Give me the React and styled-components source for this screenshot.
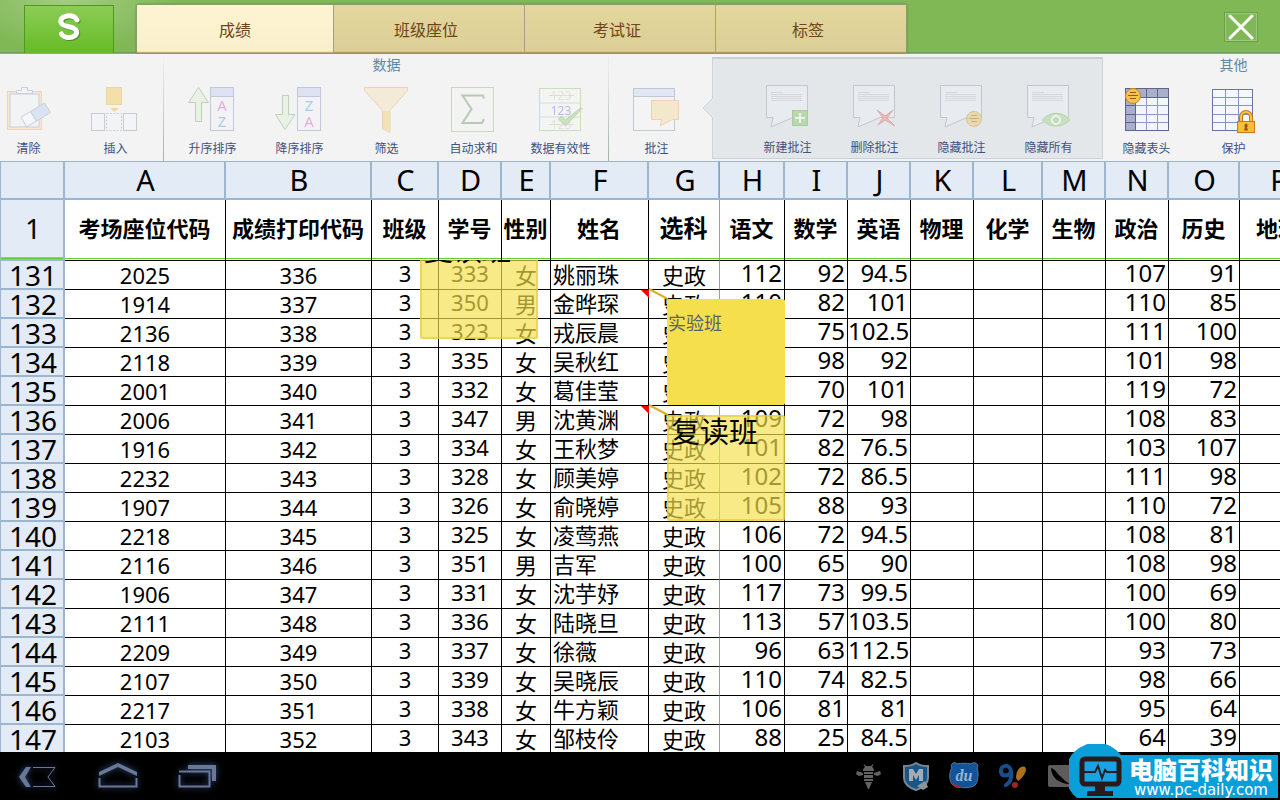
import styled, { createGlobalStyle, css } from 'styled-components';

const GlobalStyle = createGlobalStyle`
  * {
    box-sizing: border-box;
  }

  body {
    margin: 0;
    background: #fff;
    font-family: "Noto Sans", "Noto Sans CJK SC", sans-serif;
  }

  button {
    font-family: inherit;
    border: none;
    background: none;
    padding: 0;
    cursor: pointer;
  }
`;

const Page = styled.div`
  display: flex;
  flex-direction: column;
  height: 100vh;
  overflow: hidden;
`;

/* ---------- title bar ---------- */

const TopBar = styled.header`
  display: flex;
  align-items: flex-end;
  flex: none;
  height: 54px;
  padding-left: 24px;
  background: radial-gradient(ellipse 110px 50px at 69px 0, #a3cc82, #80b855);
  border-bottom: 1px solid #8ba6a5;
  box-shadow: inset 0 -1px 0 #6f9d55;
`;

const LogoButton = styled.button`
  display: flex;
  justify-content: center;
  align-items: flex-start;
  width: 90px;
  height: 48px;
  padding-top: 6px;
  margin-right: 22px;
  background: linear-gradient(#8ccc56, #66bb25);
  border: 1px solid #4e9a20;
  border-bottom: none;
`;

const TabList = styled.nav`
  display: flex;
  border: 1px solid #85a06c;
  border-bottom: none;
  border-radius: 2px 2px 0 0;
  box-shadow: 0 0 2px rgba(60, 80, 40, 0.5);
`;

const Tab = styled.button`
  width: ${(props) => (props.$active ? '197px' : '191px')};
  height: 48px;
  padding: ${(props) => (props.$active ? '2px 0 0' : '2px 6px 0 0')};
  font-size: 16px;
  line-height: 24px;
  color: #6f4517;
  background: ${(props) =>
    props.$active ? 'linear-gradient(#fef4d2, #f8efcb)' : 'linear-gradient(#e3d79e, #dbce96)'};
  border-right: 1px solid #a89f82;
  box-shadow: inset 0 -2px 1px -1px rgba(110, 90, 40, 0.5);

  &:last-child {
    width: 190px;
    border-right: none;
  }
`;

const CloseButton = styled.button`
  display: flex;
  justify-content: center;
  align-items: center;
  align-self: center;
  width: 34px;
  height: 30px;
  margin-left: auto;
  margin-right: 22px;
  border: 1px solid #6d9f48;
  box-shadow: inset 0 0 0 1px #9cc97b;
`;

/* ---------- ribbon ---------- */

const Ribbon = styled.div`
  display: flex;
  flex: none;
  height: 107px;
  overflow: hidden;
  background: #f3f3f3;
`;

const Group = styled.section`
  display: flex;
  flex-direction: column;
  flex: none;
  padding: 0 ${(props) => props.$pad || '0'};
  border-right: 1px solid;
  border-image: linear-gradient(#f3f3f3, #9fb3a5) 1;

  ${(props) =>
    props.$scrolled &&
    css`
      margin-left: -15px;
    `}

  ${(props) =>
    props.$plain &&
    css`
      border: none;
    `}
`;

const GroupTitle = styled.h2`
  height: 22px;
  margin: 0;
  font-size: 14px;
  font-weight: 400;
  line-height: 22px;
  text-align: center;
  color: #6485a4;
`;

const Tools = styled.div`
  display: flex;
  width: ${(props) => props.$width || 'auto'};
`;

const Tool = styled.button`
  display: flex;
  flex-direction: column;
  align-items: center;
  width: 87px;
  padding-top: 9px;
  font-size: 12px;
  line-height: 18px;
  color: #3f5180;

  svg {
    opacity: ${(props) => (props.$dim ? 0.4 : 1)};
    margin-bottom: 5px;
  }
`;

const CommentPanel = styled.section`
  position: relative;
  display: flex;
  align-items: flex-start;
  flex: none;
  width: 391px;
  height: 102px;
  margin-top: 3px;
  padding: 16px 0 0 31px;
  background: #e3e7ea;
  border: 1px solid #ccd3d8;
  border-top: 2px solid #c8ced4;
`;

const PanelArrow = styled.svg`
  position: absolute;
  left: -11px;
  top: 38px;
`;

/* ---------- sheet ---------- */

const Sheet = styled.main`
  position: relative;
  flex: 1;
  min-height: 0;
  overflow: hidden;
`;

/* zero width with a fixed layout keeps every column at its own size */
const Grid = styled.table`
  width: 0;
  table-layout: fixed;
  border-collapse: separate;
  border-spacing: 0;
  color: #000;
`;

const Col = styled.col`
  width: ${(props) => props.$width}px;
`;

const lineColor = (props) => (props.$frozen ? '#6bc93b' : '#000');

const ColumnHead = styled.th`
  height: 39px;
  padding: 0 0 0 2px;
  font-size: 29px;
  font-weight: 400;
  line-height: 36px;
  background: #e3ebf7;
  border-top: 1px solid #9db6d0;
  border-bottom: 2px solid #9db6d0;
  border-right: 2px solid #9db6d0;

  ${(props) =>
    props.$frozen &&
    css`
      border-right: 1px solid #6bc93b;
      box-shadow: inset -1px 0 0 #9db6d0;
    `}
`;

const Corner = styled(ColumnHead)`
  border-left: 1px solid #9db6d0;
`;

const RowHead = styled.th`
  padding: 0 0 0 2px;
  font-size: 28px;
  font-weight: 400;
  text-align: center;
  background: #e3ebf7;
  border-left: 1px solid #9db6d0;
  border-right: 2px solid #9db6d0;
  border-bottom: 2px solid #9db6d0;
`;

const RowNumber = styled.span`
  display: block;
  height: 27px;
  line-height: 29px;
`;

const FieldRow = styled.tr`
  height: 61px;

  & > td,
  & > th {
    padding-bottom: 4px;
    box-shadow: inset 0 -1px 0 #fff, inset 0 -2px 0 #5fd02c;
  }

  & > th:first-child {
    box-shadow: inset 0 -1px 0 #5fd02c, inset 0 -2px 0 #9db6d0;
  }
`;

const Field = styled.th`
  padding: 0 1px 0 0;
  font-size: ${(props) => (props.$large ? '24px' : '22px')};
  font-weight: 700;
  line-height: 32px;
  white-space: nowrap;
  border-right: 1px solid ${lineColor};
  border-bottom: 1px solid #000;
`;

const Cell = styled.td`
  height: 29px;
  padding: 0;
  font-size: 22px;
  line-height: 28px;
  vertical-align: top;
  text-align: center;
  white-space: nowrap;
  border-right: 1px solid ${lineColor};
  border-bottom: 1px solid #000;

  ${(props) =>
    props.$kind === 'raised' &&
    css`
      line-height: 25px;
    `}

  ${(props) =>
    props.$kind === 'name' &&
    css`
      padding-left: 2px;
      line-height: 27px;
      text-align: left;
    `}

  ${(props) =>
    props.$kind === 'score' &&
    css`
      padding-right: 2px;
      font-size: 24px;
      line-height: 23px;
      text-align: right;
    `}
`;

/* Notes float above the scrolled rows and are cut off at the frozen line */
const NoteLayer = styled.div`
  position: absolute;
  top: 99px;
  left: 0;
  right: 0;
  bottom: 0;
  overflow: hidden;
  pointer-events: none;
`;

const Note = styled.aside`
  position: absolute;
  left: ${(props) => props.$x}px;
  top: ${(props) => props.$y}px;
  width: 118px;
  height: 106px;
  padding: 0 2px;
  font-size: 29px;
  line-height: 30px;
  white-space: nowrap;
  color: #000;
  background: rgba(245, 223, 75, 0.67);
  border: 2px solid rgba(226, 200, 60, 0.6);
  border-radius: 2px;

  ${(props) =>
    props.$solid &&
    css`
      padding: 11px 0;
      font-size: 18px;
      line-height: 24px;
      color: #55636b;
      background: #f5df4d;
      border-color: #f5df4d;
      border-width: 1px;
    `}
`;

const Leaders = styled.svg`
  position: absolute;
  left: 640px;
  top: 28px;
`;

/* ---------- system bar ---------- */

const SystemBar = styled.footer`
  position: relative;
  display: flex;
  align-items: center;
  flex: none;
  height: 48px;
  padding-left: 14px;
  background: #000;
`;

const NavButton = styled.button`
  display: flex;
  width: 48px;
  height: 36px;
  margin-right: 32px;

  svg {
    filter: drop-shadow(0 0 3px #33518a);
  }
`;

const Tray = styled.div`
  display: flex;
  gap: 16px;
  margin-left: auto;
  margin-right: 204px;
`;

const Watermark = styled.div`
  position: absolute;
  right: 2px;
  top: -8px;
  display: flex;
  height: 54px;
`;

const Badge = styled.svg`
  position: relative;
  z-index: 1;
  margin-right: -50px;
`;

const WatermarkText = styled.div`
  margin-top: 11px;
  padding: 1px 5px 0 50px;
  color: #fff;
  background: #0a9fd8;
  text-align: center;
  white-space: nowrap;
`;

const WatermarkName = styled.div`
  font-family: "Noto Sans CJK SC", sans-serif;
  font-size: 24px;
  font-weight: 900;
  line-height: 26px;
`;

const WatermarkUrl = styled.div`
  font-family: "DejaVu Sans", sans-serif;
  font-size: 15px;
  line-height: 16px;
`;

/* ---------- icons ---------- */

const Icon = ({ children }) => (
  <svg width="50" height="50" viewBox="0 0 50 50" fill="none" aria-hidden="true">
    {children}
  </svg>
);

const ClearIcon = () => (
  <Icon>
    <rect x="3.5" y="6.5" width="34" height="38" fill="#f3dca4" stroke="#e5a94a" />
    <rect x="6" y="9" width="29" height="33" fill="#f1f3f8" stroke="#8d9bb5" />
    <path d="M12.500 8.500v-3h5v-3h6v3h5v3z" fill="#f1f3f8" stroke="#8d9bb5" />
    <path d="M17 32l9.500-5.500 6 9.500-10 6z" fill="#fafbfe" stroke="#8198bf" />
    <path d="M26.500 26.500l14-8.500 6 9.500-14 8.500z" fill="#b3cdf0" stroke="#8198bf" />
  </Icon>
);

const InsertIcon = () => (
  <Icon>
    <rect x="15.500" y="2.500" width="15" height="17" fill="#f3c33b" stroke="#e2a93a" />
    <path d="M19 23h9l-4.500 4z" fill="#f0a93d" />
    <rect x=".5" y="28.500" width="13" height="17" fill="#f5f6f9" stroke="#8592ad" />
    <rect x="15.500" y="28.500" width="15" height="17" stroke="#8592ad" strokeDasharray="2 1.500" />
    <rect x="32.500" y="28.500" width="13" height="17" fill="#f5f6f9" stroke="#8592ad" />
  </Icon>
);

const SortIcon = ({ down }) => (
  <Icon>
    <path
      d={
        down
          ? 'M7.500 10.500h6v19h6.500l-10 15-9.500-15h7z'
          : 'M10.500 2.500l10 15h-7v19h-6v-19h-7z'
      }
      fill="#dcefcf"
      stroke="#6f9f5d"
    />
    <rect x="22.500" y="2.500" width="23" height="43" fill="#f3f4fa" stroke="#7a88c0" />
    <rect x="22.500" y="2.500" width="23" height="9" fill="#c0cbf1" stroke="#7a88c0" />
    <text x="34" y="26" fontSize="15" textAnchor="middle" fill={down ? '#3f8fd8' : '#c545c5'}>
      {down ? 'Z' : 'A'}
    </text>
    <text x="34" y="42" fontSize="15" textAnchor="middle" fill={down ? '#c545c5' : '#3f8fd8'}>
      {down ? 'A' : 'Z'}
    </text>
  </Icon>
);

const FilterIcon = () => (
  <Icon>
    <path d="M2.500 2.500h43v3L28 25.500v22l-7.500-3.500V25.500L2.500 5.500z" fill="#f4dfae" stroke="#e8a05a" />
    <path d="M21 26h6.500v20l-6.500-2.500z" fill="#f0c95a" />
  </Icon>
);

const SumIcon = () => (
  <Icon>
    <rect x="2.500" y="2.500" width="42" height="44" fill="#f3f5f6" stroke="#86b46e" />
    <path
      d="M35 13.500l-1-3H13.500l9 13.500L13.500 38H33l2-4"
      stroke="#5b9151"
      strokeWidth="2"
    />
  </Icon>
);

const ValidityIcon = () => (
  <Icon>
    <rect x="3.500" y="3.500" width="41" height="42" fill="#f6f8f5" stroke="#86c36d" />
    <path d="M4 18h40M4 32h40M13 10.500h25M13 39.500h25" stroke="#b4bcb4" />
    <text x="25" y="15" fontSize="12" textAnchor="middle" fill="#c6ccd0">123</text>
    <text x="25" y="30" fontSize="12" textAnchor="middle" fill="#5468cf">123</text>
    <text x="25" y="44" fontSize="12" textAnchor="middle" fill="#c6ccd0">123</text>
    <path d="M22.500 34l3-3 4 4L45 22.500l1 1L29.500 41z" fill="#8dd069" stroke="#65a64c" />
  </Icon>
);

const CommentIcon = () => (
  <Icon>
    <rect x="1.500" y="3.500" width="41" height="42" fill="#f6f7fa" stroke="#7c88aa" />
    <rect x="1.500" y="3.500" width="41" height="8" fill="#cdd6f3" stroke="#7c88aa" />
    <path d="M19.500 15.500h27v19h-6L28 41l2-6.500H19.500z" fill="#f6d894" stroke="#e8a05a" />
  </Icon>
);

const Bubble = ({ children }) => (
  <Icon>
    <path d="M3.500 1.500h41v32H30L8 43l2-9.500H3.500z" fill="#f1f3f7" stroke="#8f99ad" />
    <path d="M8 8.500h12M8 10.500h31M8 12.500h31M8 14.500h31M8 16.500h31" stroke="#bfc3cb" />
    {children}
  </Icon>
);

const AddCommentIcon = () => (
  <Bubble>
    <rect x="29.500" y="26.500" width="15" height="15" fill="#7ac655" stroke="#5a9e3d" />
    <path d="M37 29v10M32 34h10" stroke="#fff" strokeWidth="2" />
  </Bubble>
);

const DeleteCommentIcon = () => (
  <Bubble>
    <path d="M27 26l8 6 8-6-6 8 8 8-10-6-7 5 5-7z" fill="#ee7b74" stroke="#d84d47" />
  </Bubble>
);

const Coin = ({ x, y }) => (
  <>
    <circle cx={x} cy={y} r="7.500" fill="#f6c34b" stroke="#cc8420" />
    <path
      d={`M${x - 3} ${y - 3.5}h6M${x - 5} ${y - 0.5}h10M${x - 3} ${y + 2.5}h6`}
      stroke="#8e5a18"
    />
  </>
);

const HideCommentIcon = () => (
  <Bubble>
    <Coin x={37} y={35} />
  </Bubble>
);

const HideAllIcon = () => (
  <Bubble>
    <path d="M18.500 36c7-9 20-9 27.500 0-7.500 8-20.500 8-27.500 0z" fill="#9cd97b" stroke="#6cb04b" />
    <circle cx="32" cy="36" r="4" fill="#8bcf68" stroke="#fff" strokeWidth="2" />
  </Bubble>
);

const HideHeaderIcon = () => (
  <Icon>
    <rect x="3.500" y="3.500" width="43" height="42" fill="#f3f5fc" stroke="#5d6688" />
    <path d="M4 4h42v9H14v32H4z" fill="#a9afcb" />
    <path d="M13.500 20.500h33M13.500 29.500h33M13.500 37.500h33M24.500 13v32M35.500 13v32" stroke="#8d9cc2" />
    <path d="M3.500 12.500h43M13.500 4v41M24.500 4v9M35.500 4v9M4 20.500h9M4 29.500h9M4 37.500h9" stroke="#5d6688" />
    <rect x="3.500" y="3.500" width="43" height="42" stroke="#5d6688" />
    <Coin x={11} y={11} />
  </Icon>
);

const ProtectIcon = () => (
  <Icon>
    <rect x="3.500" y="4.500" width="40" height="41" fill="#f5f7fd" stroke="#6577a0" />
    <path d="M4 12.500h39M4 20.500h39M4 29.500h39M4 37.500h39M16.500 5v40M29.500 5v40" stroke="#8495bf" />
    <path d="M32 37v-5a5 5 0 0 1 10 0v5" stroke="#c47a12" strokeWidth="4" />
    <path d="M32 37v-5a5 5 0 0 1 10 0v5" stroke="#fbc443" strokeWidth="2" />
    <rect x="28.500" y="36.500" width="17" height="11" fill="#f7bf35" stroke="#d6761a" />
    <path d="M37 38.500a2 2 0 0 1 1 3.500l1 3.500h-4l1-3.500a2 2 0 0 1 1-3.500z" fill="#a5501a" />
  </Icon>
);

/* ---------- data ---------- */

const columns = [
  { letter: 'A', title: '考场座位代码', width: 161 },
  { letter: 'B', title: '成绩打印代码', width: 146 },
  { letter: 'C', title: '班级', width: 67, kind: 'raised' },
  { letter: 'D', title: '学号', width: 63, kind: 'raised' },
  { letter: 'E', title: '性别', width: 49 },
  { letter: 'F', title: '姓名', width: 98, kind: 'name' },
  { letter: 'G', title: '选科', width: 71, large: true, frozen: true },
  { letter: 'H', title: '语文', width: 65, kind: 'score' },
  { letter: 'I', title: '数学', width: 63, kind: 'score' },
  { letter: 'J', title: '英语', width: 63, kind: 'score' },
  { letter: 'K', title: '物理', width: 63, kind: 'score' },
  { letter: 'L', title: '化学', width: 69, kind: 'score' },
  { letter: 'M', title: '生物', width: 63, kind: 'score' },
  { letter: 'N', title: '政治', width: 63, kind: 'score' },
  { letter: 'O', title: '历史', width: 71, kind: 'score' },
  { letter: 'P', title: '地理', width: 78, kind: 'score' },
];

// seat, student number, sex, name, 语文, 数学, 英语, 政治, 历史
const students = [
  [2025, 333, '女', '姚丽珠', 112, 92, 94.5, 107, 91],
  [1914, 350, '男', '金晔琛', 110, 82, 101, 110, 85],
  [2136, 323, '女', '戎辰晨', '', 75, 102.5, 111, 100],
  [2118, 335, '女', '吴秋红', '', 98, 92, 101, 98],
  [2001, 332, '女', '葛佳莹', '', 70, 101, 119, 72],
  [2006, 347, '男', '沈黄渊', 109, 72, 98, 108, 83],
  [1916, 334, '女', '王秋梦', 101, 82, 76.5, 103, 107],
  [2232, 328, '女', '顾美婷', 102, 72, 86.5, 111, 98],
  [1907, 326, '女', '俞晓婷', 105, 88, 93, 110, 72],
  [2218, 325, '女', '凌莺燕', 106, 72, 94.5, 108, 81],
  [2116, 351, '男', '吉军', 100, 65, 90, 108, 98],
  [1906, 331, '女', '沈芋妤', 117, 73, 99.5, 100, 69],
  [2111, 336, '女', '陆晓旦', 113, 57, 103.5, 100, 80],
  [2209, 337, '女', '徐薇', 96, 63, 112.5, 93, 73],
  [2107, 339, '女', '吴晓辰', 110, 74, 82.5, 98, 66],
  [2217, 338, '女', '牛方颖', 106, 81, 81, 95, 64],
  [2103, 343, '女', '邹枝伶', 88, 25, 84.5, 64, 39],
];

const rows = students.map(([seat, no, sex, name, h, i, j, n, o], index) => ({
  number: 131 + index,
  cells: [seat, 336 + index, 3, no, sex, name, '史政', h, i, j, '', '', '', n, o, ''],
}));

const tabs = ['成绩', '班级座位', '考试证', '标签'];

const logoStroke =
  'M23 8C21 4.500 17 3.500 13 4 7 5 5.500 9 8 12c3 3.500 13 2 14.500 7 1 4-3 6.500-7.500 6.500-4 0-6-1-7.500-3.500';

const App = () => {
  return (
    <Page>
      <GlobalStyle />

      <TopBar>
        <LogoButton aria-label="S">
          <svg width="30" height="30" viewBox="0 0 30 30" fill="none" strokeWidth="5" strokeLinecap="round">
            <path d={logoStroke} transform="translate(1 1)" stroke="#4b8f22" />
            <path d={logoStroke} stroke="#fff" />
          </svg>
        </LogoButton>
        <TabList>
          {tabs.map((tab, index) => (
            <Tab key={tab} $active={index === 0}>{tab}</Tab>
          ))}
        </TabList>
        <CloseButton aria-label="关闭">
          <svg width="26" height="26" viewBox="0 0 26 26" fill="none">
            <path d="M2 2l22 22M24 2L2 24" stroke="#fff" strokeWidth="3" strokeLinecap="round" />
          </svg>
        </CloseButton>
      </TopBar>

      <Ribbon>
        <Group $scrolled>
          <GroupTitle />
          <Tools $width="178px">
            <Tool $dim><ClearIcon />清除</Tool>
            <Tool $dim><InsertIcon />插入</Tool>
          </Tools>
        </Group>
        <Group $pad="4px 0 5px">
          <GroupTitle>数据</GroupTitle>
          <Tools>
            <Tool $dim><SortIcon />升序排序</Tool>
            <Tool $dim><SortIcon down />降序排序</Tool>
            <Tool $dim><FilterIcon />筛选</Tool>
            <Tool $dim><SumIcon />自动求和</Tool>
            <Tool $dim><ValidityIcon />数据有效性</Tool>
          </Tools>
        </Group>
        <Group $plain $pad="4px">
          <GroupTitle />
          <Tools $width="95px">
            <Tool $dim><CommentIcon />批注</Tool>
          </Tools>
        </Group>
        <CommentPanel>
          <PanelArrow width="12" height="22" viewBox="0 0 12 22">
            <path d="M12 0L1 11l11 11z" fill="#e3e7ea" />
            <path d="M11 1L1 11l10 10" fill="none" stroke="#ccd3d8" />
          </PanelArrow>
          <Tool $dim><AddCommentIcon />新建批注</Tool>
          <Tool $dim><DeleteCommentIcon />删除批注</Tool>
          <Tool $dim><HideCommentIcon />隐藏批注</Tool>
          <Tool $dim><HideAllIcon />隐藏所有</Tool>
        </CommentPanel>
        <Group $plain>
          <GroupTitle>其他</GroupTitle>
          <Tools $width="261px">
            <Tool><HideHeaderIcon />隐藏表头</Tool>
            <Tool><ProtectIcon />保护</Tool>
          </Tools>
        </Group>
      </Ribbon>

      <Sheet>
        <Grid>
          <colgroup>
            <Col $width={65} />
            {columns.map((column) => (
              <Col key={column.letter} $width={column.width} />
            ))}
          </colgroup>
          <thead>
            <tr>
              <Corner />
              {columns.map((column) => (
                <ColumnHead key={column.letter} scope="col" $frozen={column.frozen}>
                  {column.letter}
                </ColumnHead>
              ))}
            </tr>
            <FieldRow>
              <RowHead scope="row">1</RowHead>
              {columns.map((column) => (
                <Field key={column.letter} $large={column.large} $frozen={column.frozen}>
                  {column.title}
                </Field>
              ))}
            </FieldRow>
          </thead>
          <tbody>
            {rows.map((row) => (
              <tr key={row.number}>
                <RowHead scope="row">
                  <RowNumber>{row.number}</RowNumber>
                </RowHead>
                {columns.map((column, index) => (
                  <Cell key={column.letter} $kind={column.kind} $frozen={column.frozen}>
                    {row.cells[index]}
                  </Cell>
                ))}
              </tr>
            ))}
          </tbody>
        </Grid>

        <NoteLayer>
          <Leaders width="30" height="130" viewBox="0 0 30 130">
            <path d="M1 2h8v8z" fill="#f00" />
            <path d="M9 1l19 10" stroke="#d3b52a" strokeWidth="2" />
            <path d="M1 118h8v8z" fill="#f00" />
            <path d="M9 117l19 10" stroke="#d3b52a" strokeWidth="2" />
          </Leaders>
          <Note $x={420} $y={-27}>复读班</Note>
          <Note $x={667} $y={39} $solid>实验班</Note>
          <Note $x={667} $y={155}>复读班</Note>
        </NoteLayer>
      </Sheet>

      <SystemBar>
        <NavButton aria-label="返回">
          <svg width="48" height="36" viewBox="0 0 48 36" fill="none">
            <path d="M12 9h5l-6 10 6 10h-5L5 19z" fill="#6a7796" />
            <path d="M19 9.500h22l-7 9.500 7 9.500H19" stroke="#6a7796" />
          </svg>
        </NavButton>
        <NavButton aria-label="主页">
          <svg width="48" height="36" viewBox="0 0 48 36" fill="none">
            <path d="M5 18v-4L24 5l19 9v4L24 9z" fill="#6a7796" />
            <path d="M5.500 20v8.500h37V20" stroke="#6a7796" strokeWidth="2" />
          </svg>
        </NavButton>
        <NavButton aria-label="最近任务">
          <svg width="48" height="36" viewBox="0 0 48 36" fill="none">
            <path d="M14 7h28v16h-4V11H14z" fill="#6a7796" />
            <path d="M5.500 17v11.500h30V13M5 13.500h31" stroke="#6a7796" strokeWidth="2" />
          </svg>
        </NavButton>

        <Tray>
          <svg width="32" height="32" viewBox="0 0 32 32" fill="#626262">
            <path d="M12 4l2 2h5l2-2 .5.500L20 7c1.500 1 2 2 2 4H11c0-2 .5-3 2-4l-1.500-2.500z" />
            <path d="M12 12h9v2h-9zM12 15h9v3h-9zM12 19h9v2h-9zM13 22h7l-3 7h-1z" />
            <path d="M11 13L5 11 4 14l3 2 4-1zM22 13l6-2 1 3-3 2-4-1z" />
          </svg>
          <svg width="32" height="32" viewBox="0 0 32 32">
            <path d="M4 6c5 0 9-1 12-3 3 2 7 3 12 3v12c0 6-6 10-12 12C10 28 4 24 4 18z" fill="#17558a" stroke="#7b858d" strokeWidth="2" />
            <path d="M9 21V9h4l3 5 3-5h4v12h-4v-6l-3 5-3-5v6z" fill="#a5adb3" />
            <path d="M17 26l8-5 3 6-5 3z" fill="#8b949a" />
          </svg>
          <svg width="32" height="32" viewBox="0 0 32 32">
            <path d="M4 8C1 4 7 1 9 4c4-1 10-1 14 0 3-3 9 0 6 4 2 5 1 12-1 16-3 5-21 5-24 0C1 20 1 12 4 8z" fill="#11549b" stroke="#5e7896" />
            <path d="M3 21c3 4 9 6 14 6-5 2-12 2-14-6z" fill="#b02820" />
            <text x="16" y="21" fontSize="16" fontStyle="italic" fontWeight="700" textAnchor="middle" fontFamily="Liberation Serif, serif" fill="#9cb4c8">du</text>
          </svg>
          <svg width="32" height="32" viewBox="0 0 32 32" fill="none">
            <path d="M15 12c-2 4-9 5-10 0C4 4 14 4 15 11c1 7-1 12-5 14" stroke="#174f8c" strokeWidth="4" strokeLinecap="round" />
            <path d="M20 18c0-7 4-13 9-11 3 3-2 11-7 14z" fill="#ad711b" />
            <circle cx="19" cy="25" r="3" fill="#9c2620" />
          </svg>
          <svg width="32" height="32" viewBox="0 0 32 32">
            <rect x="4" y="5" width="27" height="22" rx="2" fill="#5c5c5c" />
            <path d="M7 8c0 9 8 16 19 16-5-3-7-5-10-8S11 9 7 8z" fill="#000" />
          </svg>
        </Tray>

        <Watermark>
          <Badge width="60" height="54" viewBox="0 0 60 54">
            <path d="M8 54A31 31 0 1 1 52 11l8 4v39z" fill="#0a9fd8" />
            <rect x="13" y="15" width="37" height="25" rx="3" fill="#18a4e4" stroke="#2a1a1c" strokeWidth="5" />
            <path d="M26 42h10v5h8v5H18v-5h8z" fill="#2a1a1c" />
            <path d="M15 28h11l3-6 4 12 3-8 2 2h10" fill="none" stroke="#2a1a1c" strokeWidth="2" />
          </Badge>
          <WatermarkText>
            <WatermarkName>电脑百科知识</WatermarkName>
            <WatermarkUrl>www.pc-daily.com</WatermarkUrl>
          </WatermarkText>
        </Watermark>
      </SystemBar>
    </Page>
  );
};

export default App;
